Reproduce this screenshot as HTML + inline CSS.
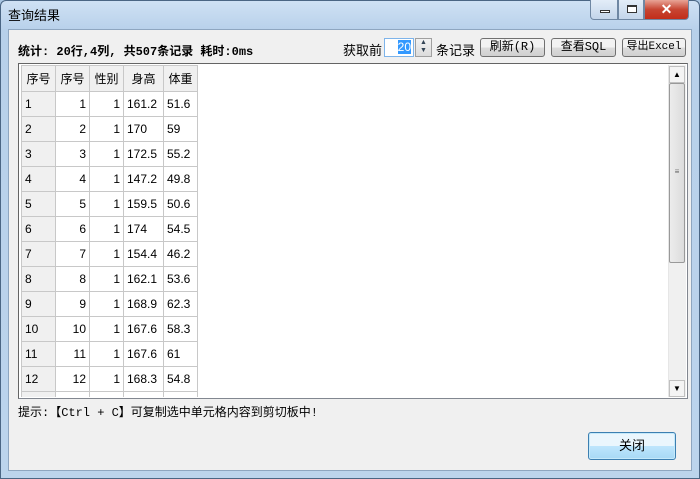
<!DOCTYPE html>
<html><head><meta charset="utf-8"><style>
*{margin:0;padding:0;box-sizing:border-box}
body{width:700px;height:479px;overflow:hidden;background:#a9c6e3;font-family:"Liberation Sans","Noto Sans CJK SC",sans-serif;font-size:12px;color:#000;position:relative}
.frame{position:absolute;left:0;top:0;width:700px;height:479px;border:1px solid #4b6684;border-radius:6px 6px 0 0;background:linear-gradient(#cfe1f4,#b7d0ea 30px,#bcd4ec)}
.client{position:absolute;left:8px;top:29px;width:684px;height:442px;background:#f0f0f0;border:1px solid #8ea6c0}
.abs{position:absolute}
.title{left:8px;top:5px;font-size:13px}
.cap{top:0;height:20px;border:1px solid #6f87a3;border-top:none;background:linear-gradient(#e3edf8,#c3d5ea)}
.btn{position:absolute;border:1px solid #707070;border-radius:3px;background:linear-gradient(#f2f2f2 50%,#dcdcdc 50%,#d0d0d0);text-align:center;font-family:"Liberation Mono","Noto Sans CJK SC",monospace;font-size:12px;line-height:16px}
.clip{position:absolute;left:21px;top:65px;width:200px;height:332px;overflow:hidden}
table{border-collapse:collapse}
td{border:1px solid #c8c8c8;height:25px;padding:0 3px;font-size:12px;background:#fff}
tr.h td{background:#f0f0f0;height:26px;text-align:center}
td.n{text-align:right}
td:first-child{background:#f0f0f0}
</style></head><body>
<div class="frame"></div>
<div class="abs title">查询结果</div>
<div class="abs cap" style="left:590px;width:28px;border-radius:0 0 0 4px"><div class="abs" style="left:9px;top:10px;width:10px;height:3px;border:1px solid #333;background:#fff"></div></div>
<div class="abs cap" style="left:618px;width:26px"><div class="abs" style="left:8px;top:5px;width:10px;height:8px;border:1px solid #333;border-top-width:2px;background:#fff"></div></div>
<div class="abs cap" style="left:644px;width:45px;border-radius:0 0 4px 0;background:linear-gradient(#e8a496,#c74532 50%,#c22d1a);color:#fff;text-align:center;font-weight:bold;font-size:14px;line-height:18px">✕</div>
<div class="client"></div>
<div class="abs" style="left:18px;top:42px;font-weight:bold;font-family:'Liberation Mono','Noto Sans CJK SC',monospace;font-size:12px">统计: 20行,4列, 共507条记录 耗时:0ms</div>
<div class="abs" style="left:343px;top:40px;font-size:13px">获取前</div>
<div class="abs" style="left:384px;top:38px;width:30px;height:19px;border:1px solid #7eb4ea;background:#fff"><span style="position:absolute;right:2px;top:1px;background:#3399ff;color:#fff;line-height:14px">20</span></div>
<div class="abs" style="left:415px;top:38px;width:17px;height:19px;border:1px solid #a0a0a0;background:linear-gradient(#f2f2f2,#dcdcdc);font-size:7px;text-align:center;line-height:8px;color:#345">▲<br>▼</div>
<div class="abs" style="left:436px;top:40px;font-size:13px">条记录</div>
<div class="btn" style="left:480px;top:38px;width:65px;height:19px">刷新(R)</div>
<div class="btn" style="left:551px;top:38px;width:65px;height:19px">查看SQL</div>
<div class="btn" style="left:622px;top:38px;width:64px;height:19px;font-size:11px">导出Excel</div>
<div class="abs" style="left:18px;top:63px;width:670px;height:336px;border:1px solid #828790;background:#fff;border-top-color:#646464;border-left-color:#646464"></div>
<div class="clip"><table>
<tr class="h"><td style="width:34px">序号</td><td style="width:34px">序号</td><td style="width:34px">性别</td><td style="width:40px">身高</td><td style="width:34px">体重</td></tr>
<tr><td>1</td><td class="n">1</td><td class="n">1</td><td>161.2</td><td>51.6</td></tr>
<tr><td>2</td><td class="n">2</td><td class="n">1</td><td>170</td><td>59</td></tr>
<tr><td>3</td><td class="n">3</td><td class="n">1</td><td>172.5</td><td>55.2</td></tr>
<tr><td>4</td><td class="n">4</td><td class="n">1</td><td>147.2</td><td>49.8</td></tr>
<tr><td>5</td><td class="n">5</td><td class="n">1</td><td>159.5</td><td>50.6</td></tr>
<tr><td>6</td><td class="n">6</td><td class="n">1</td><td>174</td><td>54.5</td></tr>
<tr><td>7</td><td class="n">7</td><td class="n">1</td><td>154.4</td><td>46.2</td></tr>
<tr><td>8</td><td class="n">8</td><td class="n">1</td><td>162.1</td><td>53.6</td></tr>
<tr><td>9</td><td class="n">9</td><td class="n">1</td><td>168.9</td><td>62.3</td></tr>
<tr><td>10</td><td class="n">10</td><td class="n">1</td><td>167.6</td><td>58.3</td></tr>
<tr><td>11</td><td class="n">11</td><td class="n">1</td><td>167.6</td><td>61</td></tr>
<tr><td>12</td><td class="n">12</td><td class="n">1</td><td>168.3</td><td>54.8</td></tr>
<tr><td>13</td><td class="n">13</td><td class="n">1</td><td></td><td></td></tr>
</table></div>
<div class="abs" style="left:668px;top:65px;width:18px;height:332px;background:#f0f0f0;border-left:1px solid #e6e6e6"></div>
<div class="abs" style="left:669px;top:66px;width:16px;height:17px;background:#f4f4f4;border:1px solid #c0c0c0;font-size:8px;text-align:center;line-height:15px">▲</div>
<div class="abs" style="left:669px;top:83px;width:16px;height:180px;background:linear-gradient(90deg,#ececec,#dcdcdc);border:1px solid #999;border-radius:2px;font-size:8px;text-align:center;line-height:176px;color:#666">≡</div>
<div class="abs" style="left:669px;top:380px;width:16px;height:17px;background:#f4f4f4;border:1px solid #c0c0c0;font-size:8px;text-align:center;line-height:15px">▼</div>
<div class="abs" style="left:18px;top:403px;font-family:'Liberation Mono','Noto Sans CJK SC',monospace;font-size:12px">提示:【Ctrl + C】可复制选中单元格内容到剪切板中!</div>
<div class="abs" style="left:588px;top:432px;width:88px;height:28px;border:1px solid #3c7fb1;border-radius:3px;background:linear-gradient(#eaf6fd 50%,#bee6fd 50%,#a7d9f5);text-align:center;line-height:26px;font-size:13px;box-shadow:inset 0 0 0 1px #c5e9fa">关闭</div>
</body></html>
